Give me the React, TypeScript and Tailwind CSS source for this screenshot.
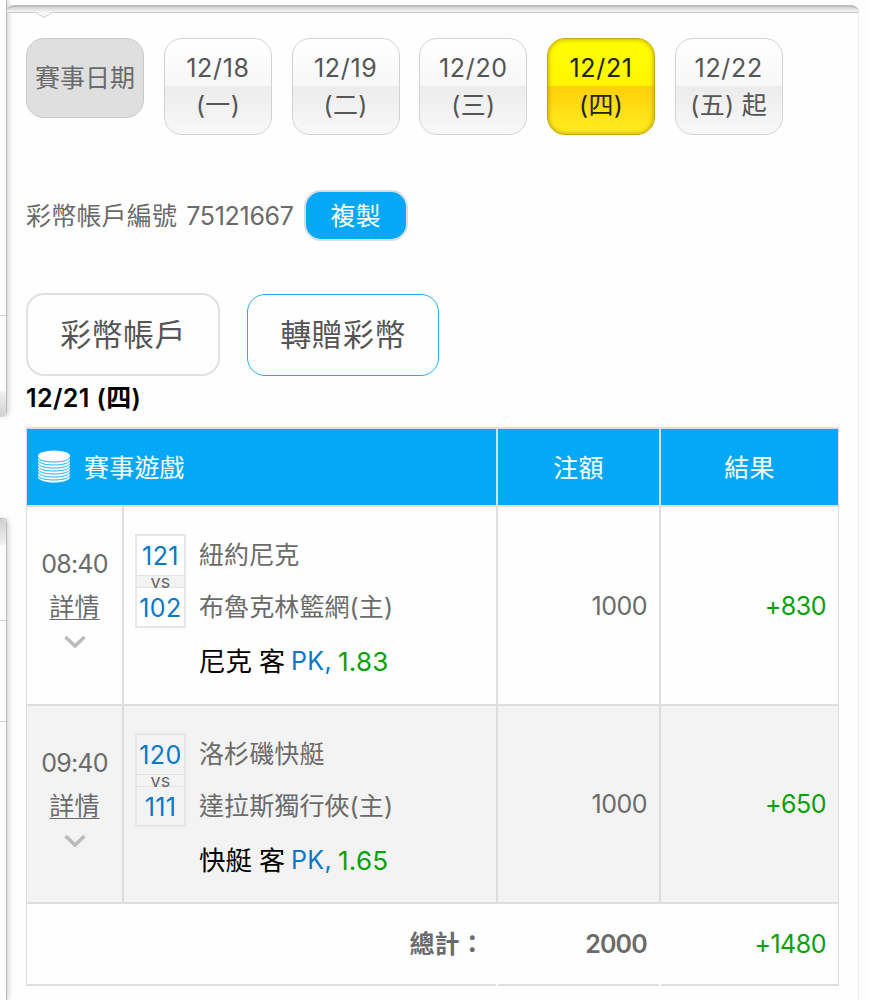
import { useState } from "react"
import clsx from "clsx"

type Bet = {
  time: string
  awayNo: string
  homeNo: string
  away: string
  home: string
  pick: string
  odds: string
  amount: string
  result: string
}

const dates = [
  { day: "12/18", week: "(一)" },
  { day: "12/19", week: "(二)" },
  { day: "12/20", week: "(三)" },
  { day: "12/21", week: "(四)" },
  { day: "12/22", week: "(五) 起" },
]

const bets: Bet[] = [
  {
    time: "08:40",
    awayNo: "121",
    homeNo: "102",
    away: "紐約尼克",
    home: "布魯克林籃網(主)",
    pick: "尼克",
    odds: "1.83",
    amount: "1000",
    result: "+830",
  },
  {
    time: "09:40",
    awayNo: "120",
    homeNo: "111",
    away: "洛杉磯快艇",
    home: "達拉斯獨行俠(主)",
    pick: "快艇",
    odds: "1.65",
    amount: "1000",
    result: "+650",
  },
]

function CoinsIcon() {
  return (
    <svg width="34" height="34" viewBox="0 0 34 34" className="shrink-0">
      <path d="M1 6v21c0 3 7 5.5 16 5.5S33 30 33 27V6z" fill="#fff" />
      <ellipse cx="17" cy="6" rx="16" ry="5.5" fill="#fff" />
      {[7, 10, 13, 16, 19, 22, 25].map((y) => (
        <path
          key={y}
          d={`M1 ${y}c0 3 7 5 16 5s16-2 16-5`}
          fill="none"
          stroke="#05a8f7"
          strokeWidth="0.9"
        />
      ))}
    </svg>
  )
}

// edge of the menu that sits under the panel
function SideMenu() {
  return (
    <div className="w-[7px] shrink-0 flex flex-col">
      <div className="h-[417px] flex flex-col rounded-br-[5px] border-r border-[#b9b9b9] shadow-[2px_0_4px_#d8d8d8]">
        <div className="h-[316px] border-b border-[#cfcfcf]"></div>
        <div className="h-[75px]"></div>
        <div className="h-[26px] rounded-br-[5px] bg-gradient-to-b from-[#f2f2f2] to-[#cfcfcf]"></div>
      </div>
      <div className="h-[101px]"></div>
      <div className="h-[482px] rounded-tr-[5px] border-r border-t border-[#b9b9b9] shadow-[2px_0_4px_#d8d8d8]">
        <div className="h-[26px] rounded-tr-[5px] bg-gradient-to-b from-[#cfcfcf] to-[#f2f2f2]"></div>
        <div className="h-[76px] border-b border-[#cfcfcf]"></div>
        <div className="h-[101px] border-b border-[#cfcfcf]"></div>
      </div>
    </div>
  )
}

function BetRow({ bet, striped }: { bet: Bet; striped: boolean }) {
  return (
    <div
      className={clsx(
        "flex border-b-2 border-[#dedede]",
        striped ? "h-[198px] bg-[#f3f3f3]" : "h-[199px]"
      )}
    >
      <div className="w-[97px] border-r-2 border-[#dedede] flex flex-col items-center pt-[37px]">
        <span className="h-10 leading-10 tracking-[-0.8px]">{bet.time}</span>
        <a className="mt-[3px] h-10 leading-10 tracking-[0.2px] underline underline-offset-[3px] decoration-1">詳情</a>
        <svg width="22" height="14" viewBox="0 0 22 14" className="mt-2">
          <path d="M1.500 2l9.500 9L20.500 2" fill="none" stroke="#bbb" strokeWidth="3.6" />
        </svg>
      </div>

      <div className="w-[374px] border-r-2 border-[#dedede] flex pl-[11px] pt-[27px]">
        <div className="w-[51px] h-[94px] border-2 border-[#e6e6e6] flex flex-col text-center text-[#0878c8]">
          <div className={clsx("h-[39px] leading-[41px] tracking-[0.4px]", !striped && "bg-white")}>{bet.awayNo}</div>
          <div className="relative h-[13px] leading-[12px] border-y border-[#e2e2e2] bg-[#f3f3f3] text-[18px] tracking-[0.3px] text-[#666]">vs</div>
          <div className={clsx("h-[38px] leading-[40px] tracking-[0.4px]", !striped && "bg-white")}>{bet.homeNo}</div>
        </div>
        <div className="ml-[13px]">
          <div className="h-[42px] leading-[42px] tracking-[0.1px]">{bet.away}</div>
          <div className="mt-[10px] h-[42px] leading-[42px] tracking-[0.1px]">{bet.home}</div>
          <div className="mt-3 h-[42px] leading-[43px] flex text-black">
            <span className="text-[26.500px] tracking-normal">{bet.pick}</span>
            <span className="ml-[7px] tracking-normal text-[26px]">客</span>
            <span className="ml-[6px] tracking-[0.3px] text-[#0878c8]">PK,</span>
            <span className="ml-[6px] tracking-[0.3px] text-[26px] text-[#07a007]">{bet.odds}</span>
          </div>
        </div>
      </div>

      <div className="w-[163px] border-r-2 border-[#dedede] flex items-center justify-end pr-3 pt-[2px]">
        {bet.amount}
      </div>
      <div className="w-[177px] flex items-center justify-end pr-3 pt-[2px] text-[#07a007]">{bet.result}</div>
    </div>
  )
}

export default function App() {
  const [selected, setSelected] = useState("12/21")

  return (
    <div className="w-[870px] h-[1000px] overflow-hidden flex bg-[#fefefe] text-[#6b6b6b] text-[25px] tracking-[-0.5px] font-[Inter,'Noto_Sans_CJK_TC',sans-serif] whitespace-nowrap">

      <SideMenu />

      <div className="w-[853px] h-[1000px] -ml-px flex flex-col">

        {/* TOP EDGE */}
        <div className="mt-[5px] h-[8px] shrink-0 relative rounded-t-[10px] border-t-2 border-b border-t-[#bdbdbd] border-b-[#cbcbcb] bg-gradient-to-b from-[#d4d4d4] to-[#f5f5f5]">
          <svg width="18" height="7" viewBox="0 0 18 7" className="absolute left-[29px] top-[5px]">
            <path d="M0 0L9 5.500L18 0" fill="#f8f8f8" stroke="#cbcbcb" />
          </svg>
        </div>

        <div className="h-[987px] border-r border-[#ebebeb] pl-[20px]">

          {/* DATES */}
          <div className="flex pt-[25px]">
            <div className="w-[118px] h-[80px] rounded-[18px] border border-[#c8c8c8] bg-[#dfdfdf] flex items-center justify-center pt-[2px] tracking-normal">
              賽事日期
            </div>
            <div className="ml-5 flex gap-[19.700px]">
              {dates.map((item) => (
                <button
                  key={item.day}
                  onClick={() => setSelected(item.day)}
                  className={clsx(
                    "w-[108px] h-[97px] rounded-[18px] border flex flex-col items-center pt-[11px] leading-[37px]",
                    item.day === selected
                      ? "border-[#c9a80c] text-[#222] bg-[linear-gradient(#ffff00,#fff500_49%,#ffd00a_50%,#ffee20)] shadow-[inset_0_0_5px_#b99700]"
                      : "border-[#d2d2d2] text-[#555] bg-[linear-gradient(#fff,#f7f7f7_49%,#ececec_50%,#f8f8f8)]"
                  )}
                >
                  <span className="tracking-[0.7px]">{item.day}</span>
                  <span className="tracking-[0.3px]">{item.week}</span>
                </button>
              ))}
            </div>
          </div>

          {/* ACCOUNT */}
          <div className="mt-[55px] h-[51px] flex items-center">
            <span className="pt-[3px] tracking-[0.2px]">彩幣帳戶編號</span>
            <span className="ml-[9px] pt-[3px] tracking-[-0.3px]">75121667</span>
            <button className="ml-[10px] w-[104px] h-[51px] rounded-[17px] border-2 border-[#d8dde0] bg-[#05a8f7] text-white pt-[2px] tracking-[0.2px]">
              複製
            </button>
          </div>

          <div className="mt-[52px] flex items-center text-[31px] tracking-[0.4px] text-[#555]">
            <button className="w-[194px] h-[83px] pt-[2px] rounded-[18px] border-2 border-[#e0e0e0]">彩幣帳戶</button>
            <button className="ml-[27px] w-[192px] h-[82px] pt-[2px] rounded-[18px] border border-[#22aef5]">轉贈彩幣</button>
          </div>

          <h2 className="h-[51px] leading-[44px] font-semibold tracking-[0.4px] text-black">12/21 (四)</h2>

          {/* TABLE */}
          <div className="w-[813px] border-x border-t-2 border-[#dedede]">
            <div className="h-[78px] flex border-b-2 border-[#dedede] bg-[#05a8f7] text-white tracking-[0.2px]">
              <div className="w-[471px] border-r-2 border-[#dedede] flex items-center pl-[10px]">
                <CoinsIcon />
                <span className="ml-[13px] pt-[3px]">賽事遊戲</span>
              </div>
              <div className="w-[163px] border-r-2 border-[#dedede] flex items-center justify-center pt-[3px]">注額</div>
              <div className="w-[177px] flex items-center justify-center pt-[3px]">結果</div>
            </div>

            {bets.map((bet, index) => (
              <BetRow key={bet.time} bet={bet} striped={index % 2 === 1} />
            ))}

            <div className="h-[82px] flex gap-[2px]">
              <div className="w-[469px] border-b-2 border-[#dedede] flex items-center justify-end pr-[11px] pt-[2px] font-bold tracking-[0.2px]">
                總計：
              </div>
              <div className="w-[161px] border-b-2 border-[#dedede] flex items-center justify-end pr-3 pt-[2px] font-semibold tracking-[-0.8px]">2000</div>
              <div className="w-[177px] border-b-2 border-[#dedede] flex items-center justify-end pr-3 pt-[2px] text-[#07a007]">+1480</div>
            </div>
          </div>

        </div>
      </div>
    </div>
  )
}
